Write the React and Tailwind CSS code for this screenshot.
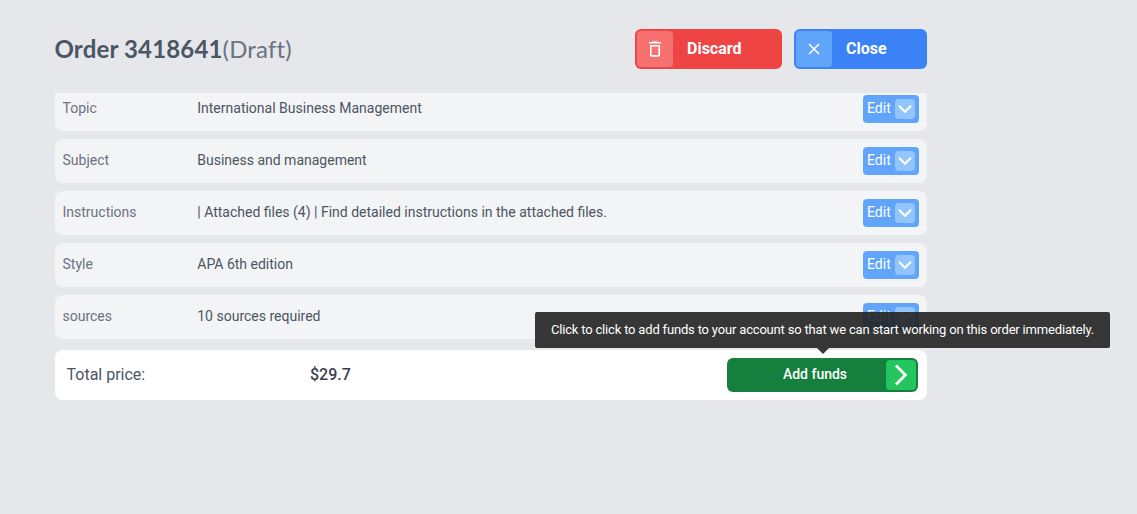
const rows = [
  { label: "Topic", value: "International Business Management" },
  { label: "Subject", value: "Business and management" },
  { label: "Instructions", value: "| Attached files (4) | Find detailed instructions in the attached files." },
  { label: "Style", value: "APA 6th edition" },
  { label: "sources", value: "10 sources required" },
];

function TrashIcon() {
  return (
    <svg viewBox="0 0 12 16" className="h-4 w-3 fill-white">
      <path d="M0 1h3.2L4 .2h4l.8.8H12v1.5H0zM1 4h10v10.1c0 .9-.7 1.6-1.6 1.6H2.6c-.9 0-1.6-.7-1.6-1.6zm1.6 1.5v8.6h6.8V5.5z" fillRule="evenodd" />
    </svg>
  );
}

function CrossIcon() {
  return (
    <svg viewBox="0 0 12 12" className="size-3 fill-none stroke-white" strokeWidth="1.6">
      <path d="M1 1l10 10M11 1L1 11" />
    </svg>
  );
}

function ChevronDown() {
  return (
    <svg viewBox="0 0 20 20" className="size-5 fill-none stroke-white" strokeWidth="2.2">
      <path d="M4 6.7l6 6 6-6" />
    </svg>
  );
}

function ChevronRight() {
  return (
    <svg viewBox="0 0 30 30" className="size-[30px] fill-none stroke-white" strokeWidth="2.8">
      <path d="M10 5.4l9.4 9.6L10 24.6" />
    </svg>
  );
}

function Row({ label, value }) {
  return (
    <div className="flex h-11 shrink-0 items-start rounded-lg bg-[#f3f4f6] py-2 pr-2 pl-[7.5px] text-sm leading-[26px]">
      <div className="w-[134.75px] shrink-0 text-[#6b7280]">{label}</div>
      <div className="grow text-[#4b5563]">{value}</div>
      <button className="flex h-7 w-14 items-center justify-between rounded-sm bg-[#60a5fa] px-1 text-white">
        <span className="-mt-0.5">Edit</span>
        <span className="size-5 rounded-sm bg-[#93c5fd]">
          <ChevronDown />
        </span>
      </button>
    </div>
  );
}

export default function App() {
  return (
    <div className="h-[514px] overflow-hidden bg-[#e5e7eb] pt-[29px] pl-[55px] font-['Roboto',sans-serif]">
      <div className="w-[872px]">
        <header className="flex h-10 items-center">
          <h1 className="-ml-[0.5px] grow font-['Lato',sans-serif] text-2xl tracking-[0.16px] text-[#6b7280]">
            <span className="font-bold text-[#4b5563]">Order 3418641</span>(Draft)
          </h1>
          <button className="flex h-10 w-[147px] items-center rounded-md bg-[#ef4444] p-0.5 font-bold text-white">
            <span className="mr-3.5 flex size-9 items-center justify-center rounded-sm bg-[#f87171]">
              <TrashIcon />
            </span>
            Discard
          </button>
          <button className="ml-3 flex h-10 w-[133px] items-center rounded-md bg-[#3b82f6] p-0.5 font-bold text-white">
            <span className="mr-3.5 flex size-9 items-center justify-center rounded-sm bg-[#60a5fa]">
              <CrossIcon />
            </span>
            Close
          </button>
        </header>

        <main className="mt-6 flex h-[246px] flex-col justify-end gap-2 overflow-hidden">
          {rows.map((row) => (
            <Row key={row.label} {...row} />
          ))}
        </main>

        <footer className="mt-[11px] flex h-[50px] items-center rounded-lg bg-white pr-[9px] pl-[11.5px] text-base">
          <div className="w-[243.5px] text-[#4b5563]">Total price:</div>
          <div className="grow font-medium text-[#374151]">$29.7</div>
          <div className="relative">
            <button className="flex h-[34px] w-[191px] items-center rounded-md bg-[#15803d] p-0.5 text-sm text-white">
              <span className="-mt-0.5 grow pl-[15px] text-center font-medium">Add funds</span>
              <span className="size-[30px] rounded-sm bg-[#22c55e]">
                <ChevronRight />
              </span>
            </button>
            <div className="absolute -top-[46px] -left-48 flex h-9 w-[575px] items-center justify-center rounded-xs bg-[#222222]/90 text-[13px] tracking-[-0.18px] whitespace-nowrap text-white">
              <span>Click to click to add funds to your account so that we can start working on this order immediately.</span>
              <span className="absolute top-full left-[282px] border-x-[6px] border-t-[6px] border-x-transparent border-t-[#222222]/90" />
            </div>
          </div>
        </footer>
      </div>
    </div>
  );
}
